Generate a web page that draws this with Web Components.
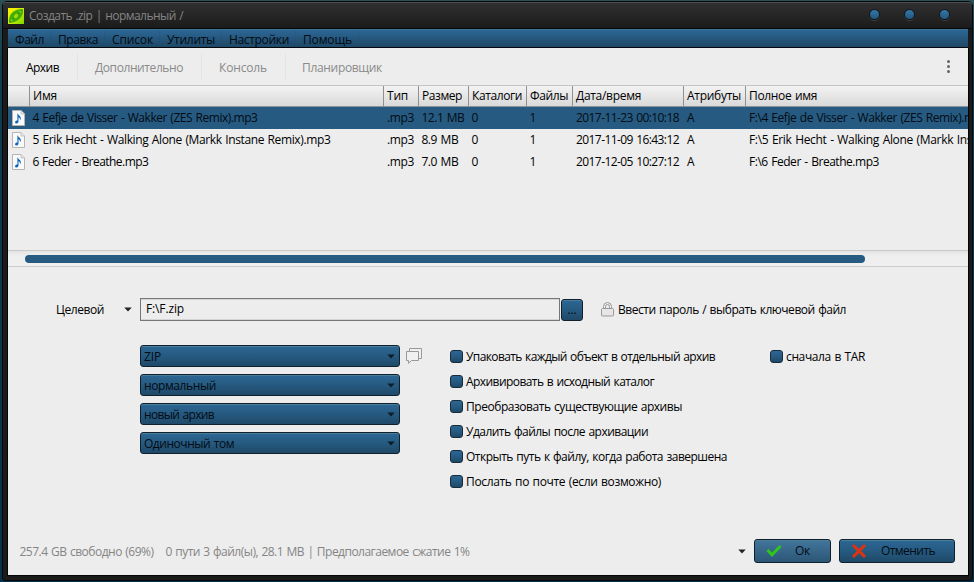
<!DOCTYPE html>
<html lang="ru">
<head>
<meta charset="utf-8">
<title>Создать .zip</title>
<style>
html, body { margin: 0; width: 974px; height: 582px; overflow: hidden; }
body { font: 12px/16px "Open Sans", "Noto Sans", sans-serif; color: #000; }
</style>
</head>
<body>
<archive-window></archive-window>
<script>
const define = (name, html, setup) => {
  const tpl = document.createElement('template');
  tpl.innerHTML = html;
  customElements.define(name, class extends HTMLElement {
    connectedCallback() {
      if (this.shadowRoot) return;
      this.attachShadow({ mode: 'open' }).append(tpl.content.cloneNode(true));
      if (setup) setup.call(this, this.shadowRoot);
    }
  });
};

/* Single-line label whose tracking is adjusted to a given width */
define('fit-label', `<style>
:host { display: block; flex: none; white-space: nowrap; }
span { display: inline-block; word-spacing: 0.8px; }
</style><span><slot></slot></span>`, function (root) {
  const width = parseFloat(this.getAttribute('w'));
  const span = root.querySelector('span');
  if (!width) return;
  const natural = span.getBoundingClientRect().width;
  if (!natural) return;
  span.style.letterSpacing = ((width - natural) / this.textContent.length) + 'px';
  this.style.width = width + 'px';
});

define('title-bar', `<style>
:host { display: flex; box-sizing: border-box; height: 27px; align-items: center; padding: 0 22px 0 5px; color: #858585;
  background: linear-gradient(#303030, #1b1b1b); border-top: 1px solid #4a4f50; border-bottom: 1px solid #05080d; border-radius: 3px 3px 0 0; }
.logo { width: 16px; height: 16px; margin-right: 5px; }
.dots { margin: -2px 0 0 auto; display: flex; gap: 24px; }
i { width: 9px; height: 9px; border: 1px solid #0e171e; border-radius: 50%; background: linear-gradient(#3575a6, #23597f); box-shadow: 0 1px 0 #3a3a3a; }
</style>
<svg class="logo" viewBox="0 0 16 16"><defs><linearGradient id="g" x2="1" y2="1"><stop offset="0" stop-color="#fff200"/><stop offset=".5" stop-color="#d8ec00"/><stop offset="1" stop-color="#72d900"/></linearGradient></defs>
<rect width="16" height="16" fill="url(#g)"/><path d="M1 15C0 7 5 1 15 1c1 7-4 13-14 14z" fill="#45ad08"/><path d="M2 14 14 2" stroke="#2f8d05"/><ellipse cx="8" cy="8" rx="2.500" ry="1.800" transform="rotate(-45 8 8)" fill="#a6dc00"/><circle cx="12.3" cy="3.8" r="1" fill="#8cd604"/><circle cx="3.7" cy="12.3" r="1" fill="#8cd604"/></svg>
<fit-label w="154">Создать .zip | нормальный /</fit-label>
<div class="dots"><i></i><i></i><i></i></div>`);

define('menu-bar', `<style>
:host { display: flex; box-sizing: border-box; height: 19px; align-items: center; color: #020a12; margin: 0 4px 0 5px;
  background: linear-gradient(#2c6796, #245478 60%, #1e4766); border-top: 1px solid #3e7092; border-bottom: 1px solid #05080d; }
div { display: flex; align-items: center; height: 17px; padding: 2px 6px 0 7px; border-right: 1px solid #1f4c6f40; box-sizing: border-box; }
</style>
<div><fit-label w="29">Файл</fit-label></div><div><fit-label w="40">Правка</fit-label></div><div><fit-label w="41">Список</fit-label></div><div><fit-label w="48">Утилиты</fit-label></div><div><fit-label w="60">Настройки</fit-label></div><div><fit-label w="49">Помощь</fit-label></div>`);

define('tab-strip', `<style>
:host { display: flex; height: 37px; align-items: center; padding: 0 17px 0 18px; color: #8a8a8a; }
div { box-sizing: border-box; display: flex; align-items: center; height: 25px; padding-top: 3px; padding-right: 18px; margin-right: 17px; border-right: 1px solid #e4e4e4; }
.on { color: #000; } div.last { border: 0; margin-left: -1px; }
svg { width: 5px; height: 15px; margin: 0 0 0 auto; }
</style>
<div class="on"><fit-label w="33">Архив</fit-label></div><div><fit-label w="88">Дополнительно</fit-label></div><div><fit-label w="48">Консоль</fit-label></div><div class="last"><fit-label w="80">Планировщик</fit-label></div>
<svg viewBox="0 0 5 15" fill="#666"><circle cx="2.5" cy="2.5" r="1.5"/><circle cx="2.5" cy="7.5" r="1.5"/><circle cx="2.5" cy="12.5" r="1.5"/></svg>`);

const COLUMNS = 'display: grid; grid-template-columns: 21px 354px 35px 50px 58px 46px 111px 62px minmax(0, 1fr);';

define('list-header', `<style>
:host { ${COLUMNS} box-sizing: border-box; height: 22px; background: linear-gradient(#f3f3f3, #d9d9d9); border-top: 1px solid #c4c4c4; border-bottom: 1px solid #8b9298; }
div { box-sizing: border-box; display: flex; align-items: center; padding-left: 3px; border-left: 1px solid #909090; overflow: hidden; }
div:first-of-type { border: 0; }
</style>
<div></div><div><fit-label w="24">Имя</fit-label></div><div><fit-label w="21">Тип</fit-label></div><div><fit-label w="40">Размер</fit-label></div><div><fit-label w="50">Каталоги</fit-label></div><div><fit-label w="38">Файлы</fit-label></div><div><fit-label w="65">Дата/время</fit-label></div><div><fit-label w="54">Атрибуты</fit-label></div><div><fit-label w="68">Полное имя</fit-label></div>`);

define('file-row', `<style>
:host { ${COLUMNS} height: 22px; align-items: center; }
:host([selected]) { background: #265a80; color: #030b14; }
div { padding-left: 4px; min-width: 0; overflow: hidden; }
#size, #name, #dirs, #files { padding-left: 3.400px; }
svg { display: block; width: 13px; height: 16px; }
</style>
<div><svg viewBox="0 0 13 16"><path d="M.5.5h8.5l3.5 3.5v11.5H.5z" fill="#fafafa" stroke="#b5b5b5"/><path d="M9 .5V4h3.5" fill="#e4e4e4" stroke="#c4c4c4"/><path d="M5.900 3.600c.3 2 2.900 2.200 2.900 4.600 0 .9-.4 1.500-.8 2 .2-1.900-.5-2.500-1.500-2.900v4.200c0 1.300-1 2-2 2s-1.600-.7-1.400-1.500c.2-1 1.400-1.600 2.300-1.300V3.600z" fill="#1263bd"/></svg></div>
<div id="name"></div><div id="type"></div><div id="size"></div><div id="dirs"></div><div id="files"></div><div id="date"></div><div id="attr"></div><div id="path"></div>`, function (root) {
  for (const cell of root.querySelectorAll('div[id]')) {
    const [text, width] = this.getAttribute(cell.id).split('|');
    const label = document.createElement('fit-label');
    label.textContent = text;
    label.setAttribute('w', width);
    cell.append(label);
  }
});

define('file-list', `<style>
:host { display: block; height: 182px; overflow: hidden; }
.rows { height: 143px; border-bottom: 1px solid #c9c9c9; }
.bar { box-sizing: border-box; height: 16px; padding: 4px 0 0 17px; border-bottom: 1px solid #cdcdcd; background: linear-gradient(#e4e4e4, #efefef 5px); }
.thumb { width: 840px; height: 8px; border-radius: 4px; background: #265a80; }
</style>
<list-header></list-header>
<div class="rows">
<file-row selected name="4 Eefje de Visser - Wakker (ZES Remix).mp3|225" type=".mp3|27" size="12.1 MB|43" dirs="0|6" files="1|6" date="2017-11-23 00:10:18|103" attr="A|8" path="F:\\4 Eefje de Visser - Wakker (ZES Remix).mp3|239"></file-row>
<file-row name="5 Erik Hecht - Walking Alone (Markk Instane Remix).mp3|298" type=".mp3|27" size="8.9 MB|37" dirs="0|6" files="1|6" date="2017-11-09 16:43:12|103" attr="A|8" path="F:\\5 Erik Hecht - Walking Alone (Markk Instane Remix).mp3|314"></file-row>
<file-row name="6 Feder - Breathe.mp3|116" type=".mp3|27" size="7.0 MB|37" dirs="0|6" files="1|6" date="2017-12-05 10:27:12|103" attr="A|8" path="F:\\6 Feder - Breathe.mp3|130"></file-row>
</div>
<div class="bar"><div class="thumb"></div></div>`);

define('down-arrow', `<style>:host { display: block; flex: none; width: 8px; height: 5px; } svg { display: block; }</style>
<svg width="8" height="5" viewBox="0 0 8 5"><path d="M.3.4h7.400L4 4.500z" fill="currentColor"/></svg>`);

const BLUE = 'box-sizing: border-box; border: 1px solid #10202d; border-radius: 3px; background: linear-gradient(#2c6795, #265a80 50%, #1f4968); box-shadow: inset 0 1px 0 #4a7f9b; color: #030b14;';

define('select-box', `<style>
:host { ${BLUE} display: flex; align-items: center; justify-content: space-between; width: 260px; height: 22px; padding: 1px 4px 0 3px; }
down-arrow { color: #0c1c29; }
</style><slot></slot><down-arrow></down-arrow>`);

define('check-option', `<style>
:host { display: flex; align-items: center; height: 25px; gap: 3px; }
i { ${BLUE} flex: none; width: 13px; height: 13px; box-shadow: none; border-color: #162c3b; }
</style><i></i><slot></slot>`);

define('push-button', `<style>
:host { ${BLUE} display: flex; align-items: center; height: 24px; }
:host([bright]) { background: linear-gradient(#43769c, #376689 50%, #2c5676); }
</style><slot></slot>`);

define('target-row', `<style>
:host { display: flex; align-items: center; height: 24px; padding-left: 48px; }
down-arrow { margin: -2px 0 0 20px; color: #222; }
.field { box-sizing: border-box; width: 420px; height: 23px; margin: -1px 0 0 8px; padding: 2px 0 0 5px; border: 1px solid #777; box-shadow: inset 0 -1px 0 #d5d5d5, inset 0 1px 0 #d5d5d5; }
push-button { width: 22px; height: 22px; margin-left: 1px; justify-content: center; }
svg { width: 13px; height: 15px; margin: -2px 4px 0 18px; }
</style>
<fit-label w="48">Целевой</fit-label><down-arrow></down-arrow><div class="field"><fit-label w="38">F:\\F.zip</fit-label></div><push-button><fit-label w="9">...</fit-label></push-button>
<svg viewBox="0 0 13 15" fill="none" stroke="#999"><path d="M2.500 7V4.500a4 4 0 0 1 8 0V7M4.500 7V4.500a2 2 0 0 1 4 0V7"/><rect x=".5" y="6.500" width="12" height="7.500" rx="1" fill="#e6e6e6"/></svg>
<fit-label w="228">Ввести пароль / выбрать ключевой файл</fit-label>`);

define('option-area', `<style>
:host { display: flex; padding-left: 132px; align-items: flex-start; }
.selects { display: grid; gap: 7px; padding-top: 1px; }
svg { width: 16px; height: 16px; margin: 4px 28px 0 6px; }
.checks { width: 320px; }
</style>
<div class="selects"><select-box><fit-label w="17">ZIP</fit-label></select-box><select-box><fit-label w="72">нормальный</fit-label></select-box><select-box><fit-label w="70">новый архив</fit-label></select-box><select-box><fit-label w="90">Одиночный том</fit-label></select-box></div>
<svg viewBox="0 0 16 16" fill="#f0f0f0" stroke="#999"><path d="M3.500 3V.5h12v10H13"/><path d="M.5 3.500h12v9H5.500L2.500 15.300v-2.800h-2z"/></svg>
<div class="checks">
<check-option><fit-label w="249">Упаковать каждый объект в отдельный архив</fit-label></check-option>
<check-option><fit-label w="188">Архивировать в исходный каталог</fit-label></check-option>
<check-option><fit-label w="216">Преобразовать существующие архивы</fit-label></check-option>
<check-option><fit-label w="182">Удалить файлы после архивации</fit-label></check-option>
<check-option><fit-label w="261">Открыть путь к файлу, когда работа завершена</fit-label></check-option>
<check-option><fit-label w="195">Послать по почте (если возможно)</fit-label></check-option>
</div>
<check-option><fit-label w="79">сначала в TAR</fit-label></check-option>`);

define('status-footer', `<style>
:host { display: flex; align-items: center; height: 24px; padding: 0 13px 0 11.500px; color: #858585; }
.info { display: flex; gap: 12px; padding-top: 2px; }
down-arrow { margin: 0 8px 0 auto; color: #222; }
push-button + push-button { margin-left: 8px; }
.ok { width: 77px; padding-left: 11px; gap: 13px; } .no { width: 116px; padding-left: 11px; gap: 14px; }
svg { width: 16px; height: 14px; }
</style>
<div class="info"><fit-label w="134">257.4 GB свободно (69%)</fit-label><fit-label w="304">0 пути 3 файл(ы), 28.1 MB | Предполагаемое сжатие 1%</fit-label></div>
<down-arrow></down-arrow>
<push-button class="ok" bright><svg viewBox="0 0 16 14"><path d="M1.500 6 6 10.800 14.500 2" fill="none" stroke="#2fc51c" stroke-width="3"/></svg><fit-label w="15">Ок</fit-label></push-button>
<push-button class="no"><svg viewBox="0 0 16 14"><path d="M2 1 14 13M14 1 2 13" fill="none" stroke="#df3211" stroke-width="3"/></svg><fit-label w="54">Отменить</fit-label></push-button>`);

define('archive-window', `<style>
:host { display: block; box-sizing: border-box; width: 974px; height: 582px; padding: 1px 1px 1px 2px; background: linear-gradient(#2c5055, #0d3d50 12%, #06334a); }
.frame { box-sizing: border-box; height: 580px; border: 1px solid #05080a; border-radius: 5px 5px 3px 3px; background: #1b1b1b; }
.body { box-sizing: border-box; width: 962px; height: 528px; margin-left: 4px; border: 1px solid #050505; border-top: 0; background: #ededed; }
target-row { margin-top: 31px; }
option-area { margin-top: 22px; }
status-footer { margin-top: 45px; }
</style>
<div class="frame"><title-bar></title-bar><menu-bar></menu-bar>
<div class="body"><tab-strip></tab-strip><file-list></file-list><target-row></target-row><option-area></option-area><status-footer></status-footer></div></div>`);
</script>
</body>
</html>
